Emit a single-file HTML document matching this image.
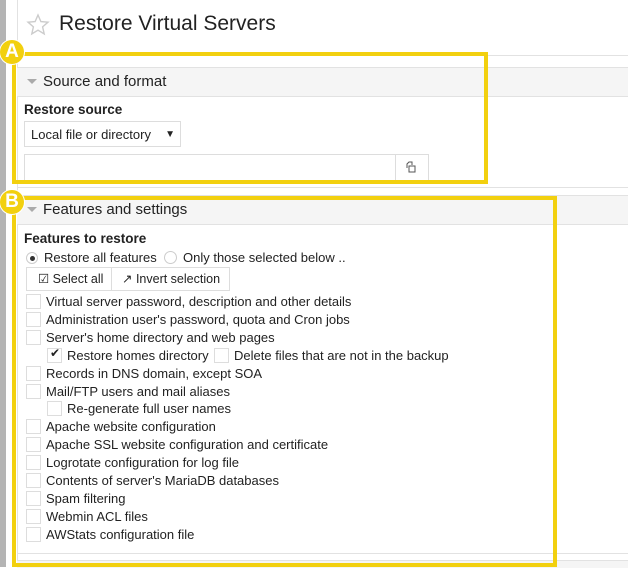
<!DOCTYPE html>
<html><head><meta charset="utf-8"><style>
body{margin:0;width:628px;height:567px;overflow:hidden;background:#fff;font-family:"Liberation Sans",sans-serif;color:#222;position:relative}
.a{position:absolute}
.gb{left:0;top:0;width:6px;height:567px;background:#b4b4b4}
.hdr{left:17px;right:0;background:#f5f5f5;border-top:1px solid #e2e2e2;border-bottom:1px solid #e2e2e2;font-size:15px;color:#222}
.tri{display:inline-block;width:0;height:0;border-left:5px solid transparent;border-right:5px solid transparent;border-top:5px solid #aaa;margin:0 6px 2px 10px;vertical-align:middle}
.cb{width:13px;height:13px;border:1px solid #ddd;background:#fff}
.t{font-size:13px;white-space:nowrap}
.circ{width:24px;height:24px;border-radius:50%;background:#f2d00f;color:#fff;font-weight:bold;font-size:19px;text-align:center;line-height:24px;box-shadow:0 0 0 1px #fff}
</style></head><body>
<div class="a gb"></div>
<div class="a" style="left:17px;top:0;width:1px;height:567px;background:#e2e2e2"></div>
<svg class="a" style="left:26px;top:13px" width="24" height="24" viewBox="0 0 24 24"><path d="M12 2l2.9 6.6 7.1.6-5.4 4.7 1.6 7-6.2-3.7-6.2 3.7 1.6-7L2 9.2l7.1-.6z" fill="none" stroke="#ccc" stroke-width="1.4"/></svg>
<div class="a" style="left:59px;top:12px;font-size:21px;color:#222">Restore Virtual Servers</div>
<div class="a" style="left:17px;right:0;top:55px;height:1px;background:#e2e2e2"></div>
<div class="a hdr" style="top:67px;height:28px;line-height:28px"><span class="tri"></span>Source and format</div>
<div class="a" style="left:24px;top:102px;font-size:13.5px;font-weight:bold">Restore source</div>
<div class="a" style="left:24px;top:121px;width:157px;height:26px;border:1px solid #ddd;font-size:13px;line-height:26px;box-sizing:border-box;padding-left:6px">Local file or directory<span style="position:absolute;right:5px;font-size:10px">▼</span></div>
<div class="a" style="left:24px;top:154px;width:405px;height:27px;border:1px solid #ddd;box-sizing:border-box"></div>
<div class="a" style="left:395px;top:154px;width:1px;height:27px;background:#ddd"></div>
<svg class="a" style="left:405px;top:161px" width="12" height="12" viewBox="0 0 12 12"><path d="M2 7V3l2-2h3v3M4 5h6v6H4z" fill="none" stroke="#555" stroke-width="1"/></svg>
<div class="a" style="left:17px;right:0;top:187px;height:1px;background:#e2e2e2"></div>
<div class="a hdr" style="top:195px;height:28px;line-height:28px"><span class="tri"></span>Features and settings</div>
<div class="a" style="left:24px;top:231px;font-size:13.5px;font-weight:bold">Features to restore</div>
<div class="a" style="left:26px;top:252px;width:12px;height:12px;border:1px solid #ccc;border-radius:50%;box-sizing:border-box"></div>
<div class="a" style="left:30px;top:256px;width:5px;height:5px;border-radius:50%;background:#333"></div>
<div class="a t" style="left:44px;top:250px">Restore all features</div>
<div class="a" style="left:164px;top:251px;width:13px;height:13px;border:1px solid #ccc;border-radius:50%;box-sizing:border-box"></div>
<div class="a t" style="left:183px;top:250px">Only those selected below ..</div>
<div class="a" style="left:26px;top:267px;width:204px;height:24px;border:1px solid #ddd;box-sizing:border-box"></div>
<div class="a" style="left:111px;top:267px;width:1px;height:24px;background:#ddd"></div>
<div class="a t" style="left:38px;top:271px;font-size:12.5px">☑ Select all</div>
<div class="a t" style="left:122px;top:271px;font-size:12.5px">↗ Invert selection</div>
<div class="a cb" style="left:26px;top:294px"></div><div class="a t" style="left:46px;top:294px">Virtual server password, description and other details</div>
<div class="a cb" style="left:26px;top:312px"></div><div class="a t" style="left:46px;top:312px">Administration user's password, quota and Cron jobs</div>
<div class="a cb" style="left:26px;top:330px"></div><div class="a t" style="left:46px;top:330px">Server's home directory and web pages</div>
<div class="a cb" style="left:47px;top:348px"></div><div class="a" style="left:50px;top:346px;font-size:12px">✔</div><div class="a t" style="left:67px;top:348px">Restore homes directory</div>
<div class="a cb" style="left:214px;top:348px"></div><div class="a t" style="left:234px;top:348px">Delete files that are not in the backup</div>
<div class="a cb" style="left:26px;top:366px"></div><div class="a t" style="left:46px;top:366px">Records in DNS domain, except SOA</div>
<div class="a cb" style="left:26px;top:384px"></div><div class="a t" style="left:46px;top:384px">Mail/FTP users and mail aliases</div>
<div class="a cb" style="left:47px;top:401px"></div><div class="a t" style="left:67px;top:401px">Re-generate full user names</div>
<div class="a cb" style="left:26px;top:419px"></div><div class="a t" style="left:46px;top:419px">Apache website configuration</div>
<div class="a cb" style="left:26px;top:437px"></div><div class="a t" style="left:46px;top:437px">Apache SSL website configuration and certificate</div>
<div class="a cb" style="left:26px;top:455px"></div><div class="a t" style="left:46px;top:455px">Logrotate configuration for log file</div>
<div class="a cb" style="left:26px;top:473px"></div><div class="a t" style="left:46px;top:473px">Contents of server's MariaDB databases</div>
<div class="a cb" style="left:26px;top:491px"></div><div class="a t" style="left:46px;top:491px">Spam filtering</div>
<div class="a cb" style="left:26px;top:509px"></div><div class="a t" style="left:46px;top:509px">Webmin ACL files</div>
<div class="a cb" style="left:26px;top:527px"></div><div class="a t" style="left:46px;top:527px">AWStats configuration file</div>
<div class="a" style="left:17px;right:0;top:553px;height:1px;background:#e2e2e2"></div>
<div class="a" style="left:17px;right:0;top:560px;height:7px;background:#f5f5f5;border-top:1px solid #e2e2e2"></div>
<div class="a" style="left:12px;top:52px;width:476px;height:132px;border:4px solid #f2d00f;box-sizing:border-box"></div>
<div class="a" style="left:12px;top:196px;width:545px;height:371px;border:4px solid #f2d00f;box-sizing:border-box"></div>
<div class="a circ" style="left:0px;top:40px">A</div>
<div class="a circ" style="left:0px;top:190px">B</div>
</body></html>
